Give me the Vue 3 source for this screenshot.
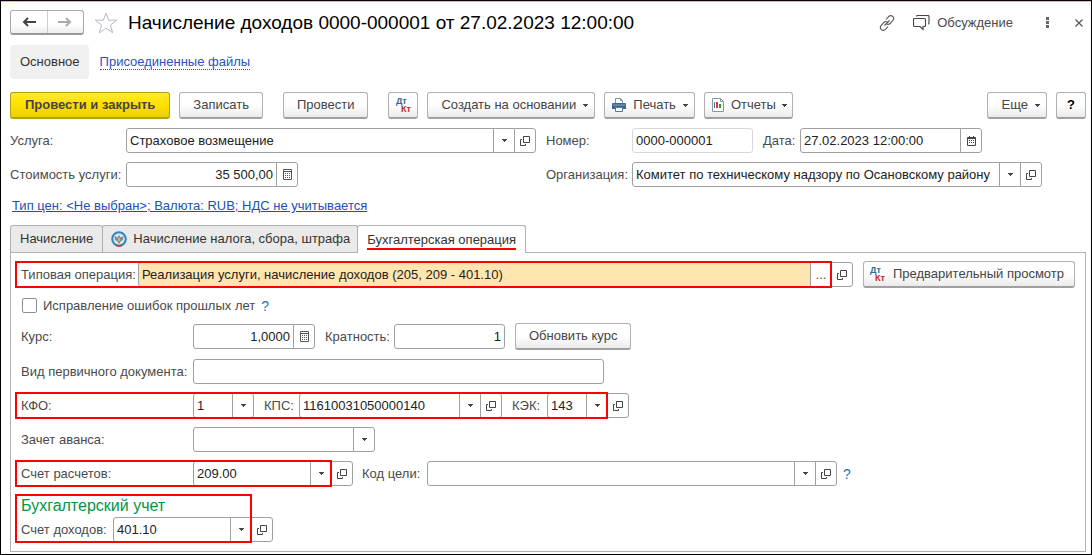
<script setup>
import { ref } from 'vue'

const service = ref('Страховое возмещение')
const cost = ref('35 500,00')
const docDate = ref('27.02.2023 12:00:00')
const organization = ref('Комитет по техническому надзору по Осановскому району')
const operation = ref('Реализация услуги, начисление доходов (205, 209 - 401.10)')
const fixErrors = ref(false)
const rate = ref('1,0000')
const multiplicity = ref('1')
const primaryDoc = ref('')
const kfo = ref('1')
const kps = ref('11610031050000140')
const kek = ref('143')
const advance = ref('')
const account = ref('209.00')
const goalCode = ref('')
const incomeAccount = ref('401.10')
</script>

<template>
  <svg class="sprite" aria-hidden="true">
    <symbol id="i-down" viewBox="0 0 5 3"><path d="M0 0h5v1h-1v1h-1v1h-1v-1h-1v-1h-1z" fill="#444" /></symbol>
    <symbol id="i-open" viewBox="0 0 10 10">
      <path d="M3.5 .5h6v6h-6z M2 3.5H.5v6h5V8" fill="none" stroke="#444" />
    </symbol>
    <symbol id="i-calc" viewBox="0 0 9 11">
      <path d="M.5 .5h8v10h-8z M1 2.5h7" fill="none" stroke="#555" />
      <path d="M2 4.5h5M2 6.5h5M2 8.5h5" fill="none" stroke="#555" stroke-dasharray="1 1" />
    </symbol>
    <symbol id="i-date" viewBox="0 0 9 10">
      <path d="M.5 1.5h8v8h-8z" fill="none" stroke="#444" />
      <path d="M1 1h7v2H1z M2 0h1v1H2z M6 0h1v1H6z" fill="#444" />
      <path d="M2 4.5h5M2 6.5h5" fill="none" stroke="#444" stroke-dasharray="1 1" />
    </symbol>
  </svg>

  <main class="window">
    <header class="head">
      <div class="nav">
        <button class="nav-btn" aria-label="Назад">
          <svg width="14" height="10" viewBox="0 0 14 10"><path d="M14 5H3M6 1L2 5l4 4" fill="none" stroke="#444" stroke-width="2" /></svg>
        </button>
        <button class="nav-btn" aria-label="Вперед">
          <svg width="14" height="10" viewBox="0 0 14 10"><path d="M0 5h11M8 1l4 4-4 4" fill="none" stroke="#aaa" stroke-width="2" /></svg>
        </button>
      </div>
      <button class="plain star" aria-label="Избранное">
        <svg width="24" height="22" viewBox="0 0 24 22"><path d="M12 1.2l2.7 7h8l-6.3 4.9 2.3 7.7L12 16.2l-6.700 4.600 2.300-7.700L1.300 8.200h8z" fill="#fff" stroke="#b4bac0" /></svg>
      </button>
      <h1>Начисление доходов 0000-000001 от 27.02.2023 12:00:00</h1>
      <button class="plain link-icon" aria-label="Ссылка">
        <svg width="16" height="16" viewBox="0 0 16 16" fill="none" stroke="#555" stroke-width="1.1">
          <path d="M7 4.500l2.400-2.700c3-3 7 .800 4.300 3.900l-2.600 2.800c-1 1-2.600 1.100-3.700.400M9 11.500l-2.400 2.700c-3 3-7-.800-4.300-3.900l2.600-2.800c1-1 2.600-1.100 3.700-.400M5.500 10.500l5-5" />
        </svg>
      </button>
      <button class="plain discuss">
        <svg width="17" height="16" viewBox="0 0 17 16" fill="none" stroke="#444" stroke-width="1.1">
          <path d="M1.500 3.500h10q1 0 1 1v6q0 1-1 1H10v3l-3-3H1.500q-1 0-1-1v-6q0-1 1-1zM3.500 1.500q0-1 1-1h10.500q1 0 1 1v6.500q0 1-1 1" />
        </svg>
        <span>Обсуждение</span>
      </button>
      <button class="plain dots" aria-label="Меню">
        <svg width="3" height="11" viewBox="0 0 3 11" fill="#666"><path d="M0 0h3v3H0zM0 4h3v3H0zM0 8h3v3H0z" /></svg>
      </button>
      <button class="plain close" aria-label="Закрыть">
        <svg width="8" height="8" viewBox="0 0 8 8"><path d="M.5 .5l7 7M7.500 .5l-7 7" stroke="#555" stroke-width="1.200" /></svg>
      </button>
    </header>

    <nav class="sections">
      <button class="plain current">Основное</button>
      <a href="#files">Присоединенные файлы</a>
    </nav>

    <div class="toolbar">
      <button class="btn primary">Провести и закрыть</button>
      <button class="btn">Записать</button>
      <button class="btn apart">Провести</button>
      <button class="btn apart square" aria-label="Дт Кт">
        <span class="dtkt"><span class="dt">Дт</span><span class="kt">Кт</span></span>
      </button>
      <button class="btn menu">Создать на основании<svg class="down"><use href="#i-down" /></svg></button>
      <button class="btn menu iconic">
        <svg width="14" height="14" viewBox="0 0 14 14">
          <path d="M3.500 5V.5h5l2 2V5" fill="#fff" stroke="#7d93a8" /><path d="M8.500 .5v2h2" fill="none" stroke="#7d93a8" />
          <path d="M1 5h12q1 0 1 1v5H0V6q0-1 1-1z" fill="#3c6791" /><path d="M1 7h12" stroke="#85a5c2" />
          <path d="M3.500 9.500h7v4h-7z" fill="#fff" stroke="#54779a" />
        </svg>Печать<svg class="down"><use href="#i-down" /></svg>
      </button>
      <button class="btn menu iconic reports">
        <svg width="14" height="14" viewBox="0 0 14 14">
          <path d="M1.500 .5h8l3 3v10h-11z" fill="#fff" stroke="#8696a5" /><path d="M9.500 .5v3h3" fill="none" stroke="#8696a5" />
          <path d="M3 4h1v6H3z" fill="#5272a6" /><path d="M5 4h2v6H5z" fill="#e03a28" /><path d="M8 6h2v4H8z" fill="#26a02b" />
        </svg>Отчеты<svg class="down"><use href="#i-down" /></svg>
      </button>
      <button class="btn menu more">Еще<svg class="down"><use href="#i-down" /></svg></button>
      <button class="btn square help">?</button>
    </div>

    <section class="top-fields">
      <label for="service">Услуга:</label>
      <div class="combo">
        <input id="service" v-model="service" class="box grow" />
        <button class="piece" aria-label="Выбрать"><svg class="down"><use href="#i-down" /></svg></button>
        <button class="piece" aria-label="Открыть"><svg class="open"><use href="#i-open" /></svg></button>
      </div>
      <label for="number" class="second">Номер:</label>
      <div class="row">
        <input id="number" class="box muted w-number" value="0000-000001" readonly />
        <label for="date" class="label-date">Дата:</label>
        <div class="combo">
          <input id="date" v-model="docDate" class="box w-date" />
          <button class="piece" aria-label="Календарь"><svg class="date"><use href="#i-date" /></svg></button>
        </div>
      </div>

      <label for="cost">Стоимость услуги:</label>
      <div class="combo">
        <input id="cost" v-model="cost" class="box num w-cost" />
        <button class="piece" aria-label="Калькулятор"><svg class="calc"><use href="#i-calc" /></svg></button>
      </div>
      <label for="org" class="second">Организация:</label>
      <div class="combo">
        <input id="org" v-model="organization" class="box grow" />
        <button class="piece" aria-label="Выбрать"><svg class="down"><use href="#i-down" /></svg></button>
        <button class="piece" aria-label="Открыть"><svg class="open"><use href="#i-open" /></svg></button>
      </div>
    </section>

    <a class="prices" href="#prices">Тип цен: &lt;Не выбран&gt;; Валюта: RUB; НДС не учитывается</a>

    <div class="tabs" role="tablist">
      <button class="tab" role="tab">Начисление</button>
      <button class="tab with-icon" role="tab">
        <svg width="16" height="16" viewBox="0 0 16 16">
          <circle cx="8" cy="8" r="6.800" fill="#dfe6ea" stroke="#2f86bd" stroke-width="2" />
          <path d="M5 14.200q3 1.500 6 0" fill="none" stroke="#c23b38" stroke-width="1.500" />
          <path d="M3.500 5l3 1.500L8 4l1.500 2.500 3-1.500-.5 4-2 1L8 13l-2-3-2-1z" fill="#7f8d98" /><path d="M7 7h2v3H7z" fill="#cfb28a" />
        </svg>
        Начисление налога, сбора, штрафа
      </button>
      <button class="tab active" role="tab" aria-selected="true"><span>Бухгалтерская операция</span></button>
    </div>

    <section class="panel">
      <div class="row">
        <div class="row marked grow">
          <label for="operation" class="label-operation">Типовая операция:</label>
          <div class="combo grow">
            <input id="operation" v-model="operation" class="box grow amber" />
            <button class="piece" aria-label="Выбрать">...</button>
          </div>
        </div>
        <button class="piece joined" aria-label="Открыть"><svg class="open"><use href="#i-open" /></svg></button>
        <button class="btn preview"><span class="dtkt"><span class="dt">Дт</span><span class="kt">Кт</span></span>Предварительный просмотр</button>
      </div>

      <div class="row check-row">
        <input id="fix" v-model="fixErrors" type="checkbox" />
        <label for="fix">Исправление ошибок прошлых лет</label>
        <button class="plain hint">?</button>
      </div>

      <div class="row rate-row">
        <label for="rate" class="main-label">Курс:</label>
        <div class="combo">
          <input id="rate" v-model="rate" class="box num w-rate" />
          <button class="piece" aria-label="Калькулятор"><svg class="calc"><use href="#i-calc" /></svg></button>
        </div>
        <label for="mult" class="label-mult">Кратность:</label>
        <input id="mult" v-model="multiplicity" class="box num w-mult" />
        <button class="btn refresh">Обновить курс</button>
      </div>

      <div class="row">
        <label for="primary" class="main-label">Вид первичного документа:</label>
        <input id="primary" v-model="primaryDoc" class="box w-primary" />
      </div>

      <div class="row">
        <div class="row marked">
          <label for="kfo" class="main-label">КФО:</label>
          <div class="combo">
            <input id="kfo" v-model="kfo" class="box w-short" />
            <button class="piece" aria-label="Выбрать"><svg class="down"><use href="#i-down" /></svg></button>
          </div>
          <label for="kps" class="label-code">КПС:</label>
          <div class="combo">
            <input id="kps" v-model="kps" class="box w-account-long" />
            <button class="piece" aria-label="Выбрать"><svg class="down"><use href="#i-down" /></svg></button>
            <button class="piece" aria-label="Открыть"><svg class="open"><use href="#i-open" /></svg></button>
          </div>
          <label for="kek" class="label-code">КЭК:</label>
          <div class="combo">
            <input id="kek" v-model="kek" class="box w-short" />
            <button class="piece" aria-label="Выбрать"><svg class="down"><use href="#i-down" /></svg></button>
          </div>
        </div>
        <button class="piece joined" aria-label="Открыть"><svg class="open"><use href="#i-open" /></svg></button>
      </div>

      <div class="row">
        <label for="advance" class="main-label">Зачет аванса:</label>
        <div class="combo">
          <input id="advance" v-model="advance" class="box w-account-long" />
          <button class="piece" aria-label="Выбрать"><svg class="down"><use href="#i-down" /></svg></button>
        </div>
      </div>

      <div class="row">
        <div class="row marked">
          <label for="account" class="main-label">Счет расчетов:</label>
          <div class="combo">
            <input id="account" v-model="account" class="box w-account" />
            <button class="piece" aria-label="Выбрать"><svg class="down"><use href="#i-down" /></svg></button>
          </div>
        </div>
        <button class="piece joined" aria-label="Открыть"><svg class="open"><use href="#i-open" /></svg></button>
        <label for="goal" class="label-goal">Код цели:</label>
        <div class="combo">
          <input id="goal" v-model="goalCode" class="box w-goal" />
          <button class="piece" aria-label="Выбрать"><svg class="down"><use href="#i-down" /></svg></button>
          <button class="piece" aria-label="Открыть"><svg class="open"><use href="#i-open" /></svg></button>
        </div>
        <button class="plain hint">?</button>
      </div>

      <div class="row income">
        <div class="marked">
          <h2>Бухгалтерский учет</h2>
          <div class="row">
            <label for="income" class="label-income">Счет доходов:</label>
            <div class="combo">
              <input id="income" v-model="incomeAccount" class="box w-account" />
              <button class="piece" aria-label="Выбрать"><svg class="down"><use href="#i-down" /></svg></button>
            </div>
          </div>
        </div>
        <button class="piece joined" aria-label="Открыть"><svg class="open"><use href="#i-open" /></svg></button>
      </div>
    </section>
  </main>
</template>

<style>
body { background: #fff; }
</style>

<style scoped>
* { box-sizing: border-box; }
.sprite { position: absolute; width: 0; height: 0; }
.window {
  display: flex;
  flex-direction: column;
  min-height: 100vh;
  padding: 9px 5px 2px 9px;
  border: 1px solid #000;
  background: #fff;
  box-shadow: inset 0 1px #dcc27a;
  color: #4a4a4a;
  font-family: "Liberation Sans", Arial, sans-serif;
  font-size: 13px;
  line-height: 16px;
}
button, input { font: inherit; color: inherit; margin: 0; }
button { padding: 0; white-space: nowrap; }
svg { flex: none; }
label { flex: none; white-space: nowrap; }
h1, h2 { margin: 0; font-weight: normal; }
.plain { display: flex; align-items: center; border: 0; background: none; }
.down { width: 5px; height: 3px; }
.open { width: 10px; height: 10px; }
.calc { width: 9px; height: 11px; }
.date { width: 9px; height: 10px; }

.head { display: flex; align-items: center; height: 25px; }
.nav {
  display: flex;
  flex: none;
  width: 74px;
  height: 25px;
  border: 1px solid #a9a9a9;
  border-bottom: 2px solid #9a9a9a;
  border-radius: 3px;
  background: linear-gradient(#fff 60%, #ededed);
}
.nav-btn { display: flex; flex: 1; align-items: center; justify-content: center; border: 0; background: none; }
.nav-btn + .nav-btn { border-left: 1px solid #ccc; }
.star { margin: 0 10px; }
h1 { flex: 1; color: #000; font-size: 19px; line-height: 24px; white-space: nowrap; }
.link-icon { margin-right: 18px; }
.discuss { gap: 7px; margin-right: 33px; }
.dots { margin-right: 26px; }
.close { margin-right: 3px; }

.sections { display: flex; align-items: center; gap: 11px; margin-top: 10px; }
.current { height: 34px; padding: 0 9px 0 10px; border-radius: 4px; background: #f0f0f0; color: #333; }
.sections a { color: #2a53b8; text-decoration: none; border-bottom: 1px dotted #2a53b8; line-height: 14px; }

.toolbar { display: flex; gap: 9px; margin: 13px 0 9px; }
.btn {
  display: flex;
  flex: none;
  align-items: center;
  justify-content: center;
  height: 27px;
  padding: 0 13px;
  border: 1px solid #b0b0b0;
  border-bottom: 2px solid #a0a0a0;
  border-radius: 3px;
  background: linear-gradient(#fff 50%, #eaeaea);
  color: #444;
}
.primary { padding: 0 14px; border-color: #b5a013; background: linear-gradient(#ffe92e, #ffe000 50%, #eccf00); font-weight: bold; }
.apart { margin-left: 11px; }
.square { width: 30px; padding: 0; }
.menu { gap: 7px; padding: 0 6px 0 13px; }
.iconic { padding-left: 7px; }
.reports { gap: 6px; padding: 0 5px 0 6px; }
.more { margin-left: auto; padding-left: 14px; }
.help { font-weight: bold; color: #000; }
.dtkt { display: flex; flex-direction: column; width: 15px; font-size: 9px; font-weight: bold; line-height: 8px; text-align: left; }
.dt { color: #2c6b93; }
.kt { color: #c2261c; align-self: flex-end; }

.top-fields {
  display: grid;
  grid-template-columns: 116px minmax(0, 410px) 96px minmax(0, 410px);
  row-gap: 9px;
  align-items: center;
}
.second { padding-left: 10px; }
.row { display: flex; align-items: center; min-width: 0; }
.combo { display: flex; min-width: 0; }
.grow { flex: 1; min-width: 0; }
.box {
  height: 25px;
  padding: 0 3px;
  border: 1px solid #a0a0a0;
  border-radius: 3px;
  background: #fff;
  color: #222;
  outline: none;
}
.combo .box { border-radius: 3px 0 0 3px; }
.muted { border-color: #d8d8d8; }
.num { text-align: right; }
.amber { background: #ffe5b0; }
.piece {
  display: flex;
  flex: none;
  align-items: center;
  justify-content: center;
  width: 22px;
  height: 25px;
  margin-left: -1px;
  border: 1px solid #a0a0a0;
  background: #fff;
}
.piece:last-child, .joined { border-radius: 0 3px 3px 0; }
.w-number { width: 121px; }
.w-date { width: 161px; }
.w-cost { width: 151px; }
.w-rate { width: 101px; }
.w-mult { width: 111px; }
.w-primary { width: 411px; }
.w-short { width: 40px; }
.w-account-long { width: 161px; }
.w-account { width: 118px; }
.w-goal { width: 368px; }
.label-date { width: 47px; padding-left: 10px; }

.prices { align-self: flex-start; margin: 11px 0 11px 2px; color: #1d4fb5; }

.tabs { display: flex; }
.tab {
  display: flex;
  align-items: center;
  height: 27px;
  padding: 0 9px;
  border: 1px solid #b0b0b0;
  border-bottom: 0;
  border-radius: 3px 3px 0 0;
  background: #eaeaea;
  color: #333;
}
.tab + .tab { margin-left: -1px; }
.with-icon { gap: 6px; padding: 0 7px 0 8px; }
.active { height: 28px; margin-bottom: -1px; background: #fff; z-index: 1; }
.active span { padding-top: 2px; border-bottom: 2px solid #f00; }

.panel {
  display: flex;
  flex: 1;
  flex-direction: column;
  gap: 9px;
  padding: 9px 10px 8px;
  border: 1px solid #b0b0b0;
}
.marked { position: relative; }
.marked::after {
  content: "";
  position: absolute;
  inset: -1px 0 -1px -6px;
  border: 2px solid #f00;
  pointer-events: none;
}
.main-label { width: 172px; }
.label-operation { width: 117px; }
.label-mult { width: 79px; padding-left: 10px; }
.label-code { width: 45px; padding-left: 10px; }
.label-goal { width: 74px; padding-left: 9px; }
.label-income { width: 92px; }
.preview { gap: 8px; margin: -1px 0 -1px 10px; padding: 0 10px 0 6px; }
.refresh { margin: -1px 0 -1px 10px; }
.check-row { margin: 1px 0; min-height: 17px; }
.check-row label { padding-left: 6px; }
.check-row input {
  appearance: none;
  width: 15px;
  height: 15px;
  margin-left: 1px;
  border: 1px solid #909090;
  border-radius: 2px;
}
.hint { margin-left: 6px; color: #1778c4; font-size: 14px; }
.rate-row { margin-bottom: 1px; }
.income { align-items: flex-end; }
h2 { color: #009646; font-size: 16px; line-height: 22px; }
</style>
